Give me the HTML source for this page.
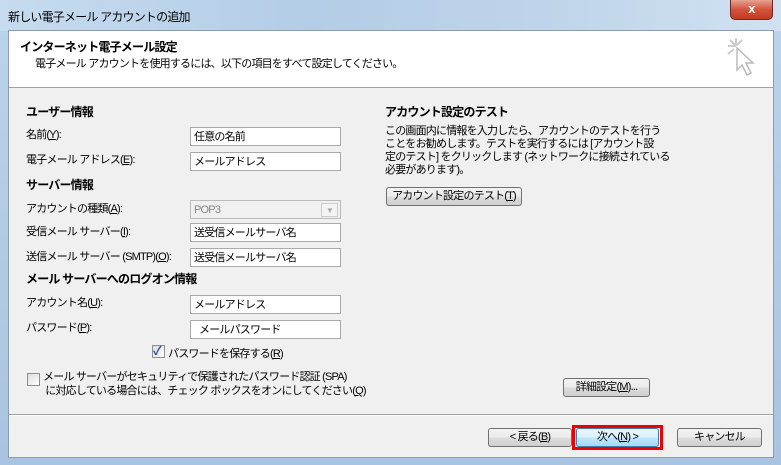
<!DOCTYPE html>
<html><head><meta charset="utf-8"><style>
*{margin:0;padding:0;box-sizing:border-box}
body{width:781px;height:465px;overflow:hidden;font-family:"Liberation Sans","Noto Sans CJK JP",sans-serif;font-size:11px;letter-spacing:-0.8px;color:#000;position:relative;background:linear-gradient(#bcd3ea,#a9c4e0)}
.a{position:absolute;white-space:nowrap}
.tb{left:0;top:0;width:781px;height:31px;background:linear-gradient(90deg,#c6dbef,#b3cde6 40%,#bfd4ea 70%,#d0e1f2)}
.win{left:8px;top:30px;width:766px;height:428px;background:#f0f0f0;border:1px solid #8a9cb0}
.hdr{left:9px;top:31px;width:764px;height:57px;background:#fff;border-bottom:1px solid #a0a0a0}
.b{font-weight:bold;font-size:12px}
.in{position:absolute;left:190px;width:151px;height:19px;background:#fff;border:1px solid #aaa;padding:1px 3px;line-height:16px;white-space:nowrap}
.btn{position:absolute;height:19px;border:1px solid #707070;border-radius:3px;background:linear-gradient(#f2f2f2,#ebebeb 50%,#dddddd 51%,#cfcfcf);text-align:center;line-height:17px;white-space:nowrap}
.cb{position:absolute;width:13px;height:13px;border:1px solid #8f8f8f;background:linear-gradient(135deg,#dcdcdc,#fff)}
</style></head><body>
<div class="a tb"></div>
<div class="a" style="left:8px;top:8px;font-size:12px">新しい電子メール アカウントの追加</div>
<div class="a" style="left:730px;top:0;width:43px;height:20px;border:1px solid #6b2a22;border-top:none;border-radius:0 0 5px 5px;background:linear-gradient(#e8a293,#d2533c 50%,#c23b22);color:#fff;text-align:center;font-weight:bold;font-size:13px;line-height:18px">x</div>
<div class="a win"></div>
<div class="a hdr"></div>
<div class="a b" style="left:20px;top:38px">インターネット電子メール設定</div>
<div class="a" style="left:35px;top:55px">電子メール アカウントを使用するには、以下の項目をすべて設定してください。</div>
<svg class="a" style="left:726px;top:36px" width="36" height="48" viewBox="0 0 36 48"><g stroke="#ccc" stroke-width="2" fill="none"><path d="M10 2v8M2 10h8M4 4l5 5M16 4l-5 5M2 18l6-5"/><path d="M11 12v22l5-5 5 10 4-2-5-10h7z" fill="#fff" stroke="#bbb" stroke-width="1.5"/></g></svg>
<div class="a b" style="left:26px;top:103px">ユーザー情報</div>
<div class="a" style="left:26px;top:126px">名前(<u>Y</u>):</div>
<div class="in" style="top:127px">任意の名前</div>
<div class="a" style="left:26px;top:151px">電子メール アドレス(<u>E</u>):</div>
<div class="in" style="top:152px">メールアドレス</div>
<div class="a b" style="left:26px;top:176px">サーバー情報</div>
<div class="a" style="left:26px;top:200px">アカウントの種類(<u>A</u>):</div>
<div class="in" style="top:200px;background:#f0f0f0;color:#888;border-color:#bbb">POP3</div>
<div class="a" style="left:321px;top:203px;width:17px;height:14px;border:1px solid #ccc;background:#f4f4f4;color:#aaa;font-size:8px;text-align:center;line-height:13px">▼</div>
<div class="a" style="left:26px;top:223px">受信メール サーバー(<u>I</u>):</div>
<div class="in" style="top:223px">送受信メールサーバ名</div>
<div class="a" style="left:26px;top:248px">送信メール サーバー (SMTP)(<u>O</u>):</div>
<div class="in" style="top:248px">送受信メールサーバ名</div>
<div class="a b" style="left:26px;top:270px">メール サーバーへのログオン情報</div>
<div class="a" style="left:26px;top:294px">アカウント名(<u>U</u>):</div>
<div class="in" style="top:295px">メールアドレス</div>
<div class="a" style="left:26px;top:319px">パスワード(<u>P</u>):</div>
<div class="in" style="top:320px;padding-left:8px">メールパスワード</div>
<div class="cb" style="left:152px;top:345px"></div>
<div class="a" style="left:153px;top:342px;color:#2a4aa0;font-size:12px;font-weight:bold">✓</div>
<div class="a" style="left:168px;top:345px">パスワードを保存する(<u>R</u>)</div>
<div class="cb" style="left:27px;top:373px"></div>
<div class="a" style="left:43px;top:370px;line-height:14px">メール サーバーがセキュリティで保護されたパスワード認証 (SPA)<br>&nbsp;に対応している場合には、チェック ボックスをオンにしてください(<u>Q</u>)</div>
<div class="a b" style="left:385px;top:103px">アカウント設定のテスト</div>
<div class="a" style="left:385px;top:125px;line-height:13px">この画面内に情報を入力したら、アカウントのテストを行う<br>ことをお勧めします。テストを実行するには [アカウント設<br>定のテスト] をクリックします (ネットワークに接続されている<br>必要があります)。</div>
<div class="btn" style="left:386px;top:187px;width:136px">アカウント設定のテスト(<u>T</u>)</div>
<div class="btn" style="left:563px;top:378px;width:87px">詳細設定(<u>M</u>)...</div>
<div class="a" style="left:9px;top:414px;width:764px;height:2px;border-top:1px solid #a0a0a0;border-bottom:1px solid #fff"></div>
<div class="btn" style="left:488px;top:428px;width:84px">&lt; 戻る(<u>B</u>)</div>
<div class="a" style="left:572px;top:425px;width:91px;height:25px;border:3px solid #ee0000"></div>
<div class="btn" style="left:576px;top:428px;width:83px;border-color:#3c7fb1;background:linear-gradient(#eaf6fd,#d9f0fc 50%,#bee6fd 51%,#a7d9f5)">次へ(<u>N</u>) &gt;</div>
<div class="btn" style="left:677px;top:428px;width:85px">キャンセル</div>
</body></html>
